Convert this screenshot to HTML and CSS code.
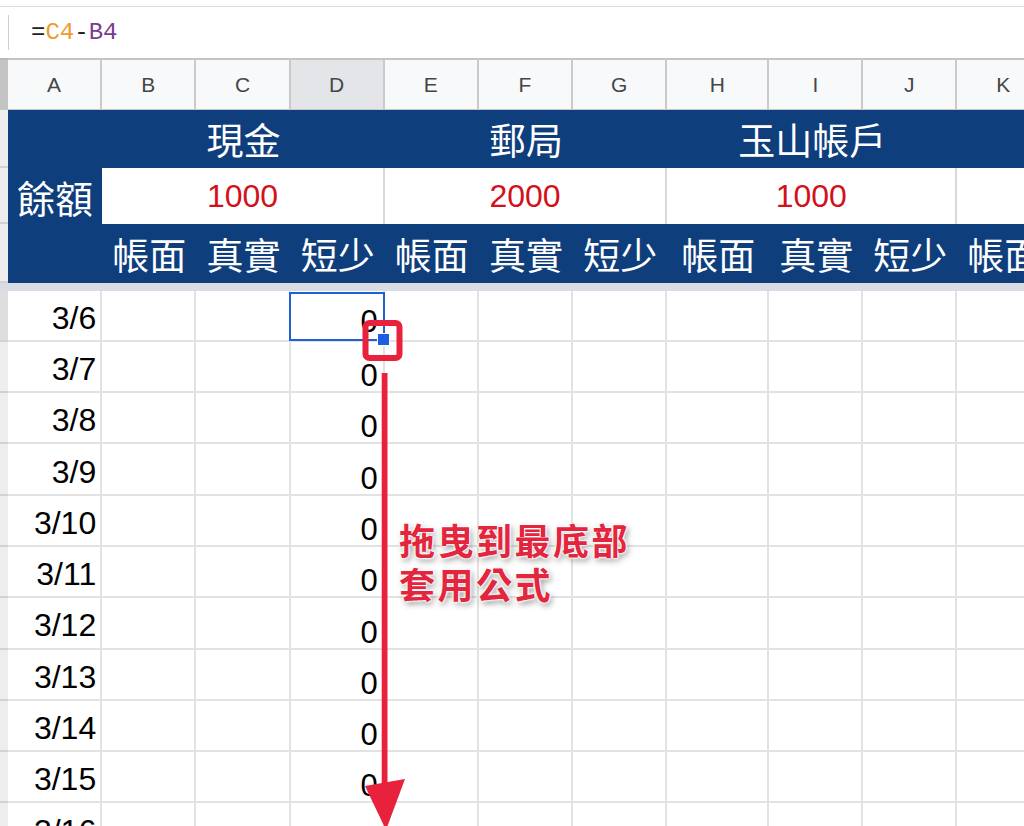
FILE: index.html
```html
<!DOCTYPE html>
<html lang="zh-Hant">
<head>
<meta charset="utf-8">
<title>Sheet</title>
<link rel="stylesheet" href="styles.css">
</head>
<body>
<div class="formula-bar"><span class="fx-divider"></span><span class="formula">=<span class="ref-c">C4</span>-<span class="ref-b">B4</span></span></div>
<div class="sheet">
  <div class="rh corner"></div>
  <div class="colh">A</div><div class="colh">B</div><div class="colh">C</div><div class="colh active">D</div><div class="colh">E</div><div class="colh">F</div><div class="colh">G</div><div class="colh">H</div><div class="colh">I</div><div class="colh">J</div><div class="colh">K</div>

  <div class="rh"></div>
  <div class="blue big span-rows">餘額</div>
  <div class="blue span3">現金</div>
  <div class="blue span3">郵局</div>
  <div class="blue span3">玉山帳戶</div>
  <div class="blue"></div>

  <div class="rh"></div>
  <div class="bal span3">1000</div>
  <div class="bal span3">2000</div>
  <div class="bal span3">1000</div>
  <div class="bal"></div>

  <div class="rh"></div>
  <div class="blue">帳面</div><div class="blue">真實</div><div class="blue">短少</div>
  <div class="blue">帳面</div><div class="blue">真實</div><div class="blue">短少</div>
  <div class="blue">帳面</div><div class="blue">真實</div><div class="blue">短少</div>
  <div class="blue">帳面</div>

  <div class="freeze"></div>

  <div class="rh rh-sel"></div><div class="c date">3/6</div><div class="c"></div><div class="c"></div><div class="c zero sel-cell">0<span class="sel"></span></div><div class="c"></div><div class="c"></div><div class="c"></div><div class="c"></div><div class="c"></div><div class="c"></div><div class="c"></div>
  <div class="rh"></div><div class="c date">3/7</div><div class="c"></div><div class="c"></div><div class="c zero">0</div><div class="c"></div><div class="c"></div><div class="c"></div><div class="c"></div><div class="c"></div><div class="c"></div><div class="c"></div>
  <div class="rh"></div><div class="c date">3/8</div><div class="c"></div><div class="c"></div><div class="c zero">0</div><div class="c"></div><div class="c"></div><div class="c"></div><div class="c"></div><div class="c"></div><div class="c"></div><div class="c"></div>
  <div class="rh"></div><div class="c date">3/9</div><div class="c"></div><div class="c"></div><div class="c zero">0</div><div class="c"></div><div class="c"></div><div class="c"></div><div class="c"></div><div class="c"></div><div class="c"></div><div class="c"></div>
  <div class="rh"></div><div class="c date">3/10</div><div class="c"></div><div class="c"></div><div class="c zero">0</div><div class="c"></div><div class="c"></div><div class="c"></div><div class="c"></div><div class="c"></div><div class="c"></div><div class="c"></div>
  <div class="rh"></div><div class="c date">3/11</div><div class="c"></div><div class="c"></div><div class="c zero">0</div><div class="c"></div><div class="c"></div><div class="c"></div><div class="c"></div><div class="c"></div><div class="c"></div><div class="c"></div>
  <div class="rh"></div><div class="c date">3/12</div><div class="c"></div><div class="c"></div><div class="c zero">0</div><div class="c"></div><div class="c"></div><div class="c"></div><div class="c"></div><div class="c"></div><div class="c"></div><div class="c"></div>
  <div class="rh"></div><div class="c date">3/13</div><div class="c"></div><div class="c"></div><div class="c zero">0</div><div class="c"></div><div class="c"></div><div class="c"></div><div class="c"></div><div class="c"></div><div class="c"></div><div class="c"></div>
  <div class="rh"></div><div class="c date">3/14</div><div class="c"></div><div class="c"></div><div class="c zero">0</div><div class="c"></div><div class="c"></div><div class="c"></div><div class="c"></div><div class="c"></div><div class="c"></div><div class="c"></div>
  <div class="rh"></div><div class="c date">3/15</div><div class="c"></div><div class="c"></div><div class="c zero">0</div><div class="c"></div><div class="c"></div><div class="c"></div><div class="c"></div><div class="c"></div><div class="c"></div><div class="c"></div>
  <div class="rh"></div><div class="c date">3/16</div><div class="c"></div><div class="c"></div><div class="c"></div><div class="c"></div><div class="c"></div><div class="c"></div><div class="c"></div><div class="c"></div><div class="c"></div><div class="c"></div>
</div>

<svg class="marks" width="1024" height="826" viewBox="0 0 1024 826" aria-hidden="true">
  <rect x="365.5" y="323" width="34" height="35" rx="4" ry="4" fill="none" stroke="#e8213c" stroke-width="6"/>
  <rect x="381.7" y="373" width="5.8" height="412" fill="#e8213c"/>
  <polygon points="365,786 405,779 386,830" fill="#e8213c"/>
</svg>
<div class="note">拖曳到最底部<br>套用公式</div>
</body>
</html>
```

FILE: styles.css
```css
* { box-sizing: border-box; }
html, body { margin: 0; padding: 0; }
body {
  width: 1024px;
  height: 826px;
  overflow: hidden;
  position: relative;
  background: #fff;
  font-family: "Liberation Sans", Arial, sans-serif;
  color: #000;
}

.formula-bar {
  margin-top: 6px;
  height: 52px;
  border-top: 1px solid #dadce0;
  display: flex;
  align-items: center;
  padding-left: 8px;
}
.fx-divider {
  width: 1px;
  height: 35px;
  background: #cfcfcf;
  margin-right: 22px;
}
.formula {
  font-family: "Liberation Mono", "DejaVu Sans Mono", monospace;
  font-size: 24px;
  color: #202124;
  white-space: pre;
}
.ref-c { color: #ef9a2f; }
.ref-b { color: #7b3a92; }

.sheet {
  display: grid;
  width: max-content;
  grid-template-columns: 8px repeat(7, 94.2px) 102px 94px 94px 94px;
  grid-template-rows: 52px 58px 56px 59px 7.5px repeat(11, 51.3px);
}

.rh {
  background: #eeeeee;
  border-bottom: 2px solid #d2d2d2;
}
.rh.corner {
  background: #c4c4c4;
  border-top: 2px solid #b9b9b9;
  border-bottom: 1px solid #c7c7c7;
}
.rh.rh-sel { background: #dedede; }

.colh {
  background: #f8f9fa;
  border-top: 2px solid #c4c4c4;
  border-right: 2px solid #cacaca;
  border-bottom: 1px solid #c7c7c7;
  display: flex;
  align-items: center;
  justify-content: center;
  font-size: 21px;
  color: #444746;
}
.colh.active { background: #e3e5e8; }

.blue {
  background: #0f3e7d;
  color: #fff;
  display: flex;
  align-items: center;
  justify-content: center;
  font-family: "Noto Sans CJK TC", "Noto Sans CJK SC", sans-serif;
  font-size: 37px;
  white-space: nowrap;
}
.blue.big { font-size: 38px; }
.span-rows { grid-row: span 3; }
.span3 { grid-column: span 3; }

.bal {
  background: #fff;
  border-right: 2px solid #d9d9d9;
  color: #d3111b;
  font-size: 32px;
  display: flex;
  align-items: center;
  justify-content: center;
}

.freeze {
  grid-column: 1 / -1;
  background: #d9dde3;
}

.c {
  border-right: 2px solid #e2e2e2;
  border-bottom: 2px solid #e2e2e2;
  font-size: 32px;
  line-height: 1;
  white-space: nowrap;
}
.date {
  display: flex;
  justify-content: flex-end;
  align-items: center;
  padding: 5px 4px 0 0;
}
.zero {
  display: flex;
  justify-content: flex-end;
  align-items: flex-end;
  padding-right: 5px;
  font-size: 31px;
}
.sel-cell {
  position: relative;
  padding-bottom: 3px;
}
.sel {
  position: absolute;
  left: -2px;
  top: 1px;
  right: -2px;
  bottom: -1px;
  border: 2.5px solid #1f5fd8;
}
.sel::after {
  content: "";
  position: absolute;
  right: -7px;
  bottom: -7px;
  width: 11px;
  height: 11px;
  background: #1b5fe2;
  border: 1px solid #fff;
}

.marks {
  position: absolute;
  left: 0;
  top: 0;
  z-index: 10;
  pointer-events: none;
}
.note {
  position: absolute;
  left: 399px;
  top: 517px;
  z-index: 11;
  font-family: "Noto Sans CJK TC", "Noto Sans CJK SC", sans-serif;
  font-weight: 700;
  font-size: 36px;
  line-height: 44px;
  letter-spacing: 2.5px;
  color: #e3263d;
  white-space: nowrap;
  text-shadow: 0 0 2px #fff, 0 0 2px #fff, 0 0 3px #fff, 0 0 3px #fff, 2px 3px 6px rgba(0,0,0,0.45);
}
```
